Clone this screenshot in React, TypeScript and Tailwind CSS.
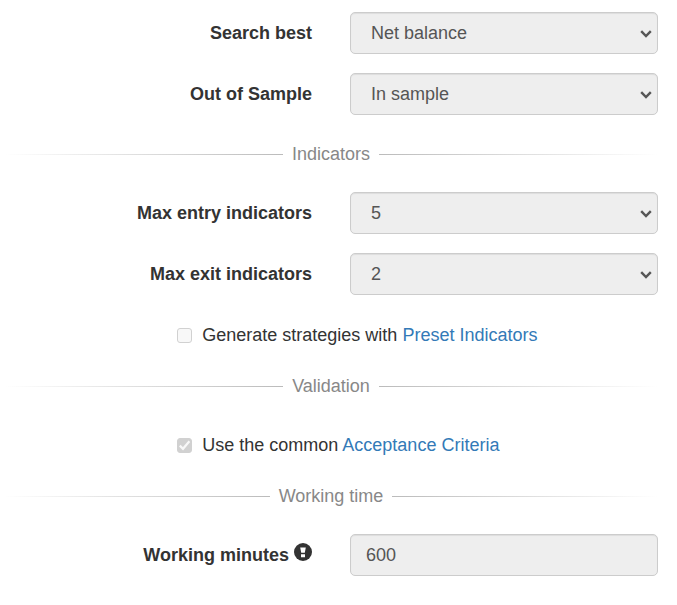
import type { ReactNode } from "react";

interface SelectRow {
  id: string;
  label: string;
  value: string;
}

const SEARCH_ROWS: SelectRow[] = [
  { id: "search-best", label: "Search best", value: "Net balance" },
  { id: "out-of-sample", label: "Out of Sample", value: "In sample" },
];

const INDICATOR_ROWS: SelectRow[] = [
  { id: "max-entry-indicators", label: "Max entry indicators", value: "5" },
  { id: "max-exit-indicators", label: "Max exit indicators", value: "2" },
];

function Field({ id, label, icon, children }: { id: string; label: string; icon?: ReactNode; children: ReactNode }) {
  return (
    <div className="grid grid-cols-2 items-center gap-[23px] px-[19px]">
      <label htmlFor={id} className="flex items-start justify-end gap-[5px] pr-[15px] text-right font-bold">
        {label}
        {icon}
      </label>
      {children}
    </div>
  );
}

function SelectField({ id, label, value }: SelectRow) {
  return (
    <Field id={id} label={label}>
      <div className="relative">
        <select
          id={id}
          defaultValue={value}
          disabled
          className="block h-[42px] w-full appearance-none rounded-[5px] border border-[#cccccc] bg-[#eeeeee] pr-8 pl-5 text-[#555555] opacity-100 shadow-[inset_0_1px_1px_rgba(0,0,0,0.075)]"
        >
          <option>{value}</option>
        </select>
        <svg
          viewBox="0 0 12 8"
          className="pointer-events-none absolute top-[18px] right-[6px] h-2 w-3"
          fill="none"
          stroke="#555555"
          strokeWidth="2.4"
          aria-hidden="true"
        >
          <path d="M1.2 1.2 6 6 10.8 1.2" />
        </svg>
      </div>
    </Field>
  );
}

function CheckRow({ id, checked, text, link }: { id: string; checked: boolean; text: string; link: string }) {
  return (
    <div className="ml-[25%] flex items-center gap-[10px] pl-2">
      <span className="relative block size-[15px] shrink-0">
        <input
          id={id}
          type="checkbox"
          defaultChecked={checked}
          disabled
          className="block size-[15px] appearance-none rounded-[3px] border border-[#d1d1d1] bg-[#f8f8f8] checked:bg-[#d1d1d1]"
        />
        {checked && (
          <svg viewBox="0 0 15 15" className="pointer-events-none absolute inset-0" fill="none" stroke="#f8f8f8" strokeWidth="2.2" aria-hidden="true">
            <path d="M2.8 7.6 6 10.8 12.4 3.2" />
          </svg>
        )}
      </span>
      <label htmlFor={id}>
        {text}{" "}
        <a href="#" className="text-[#337ab7]">
          {link}
        </a>
      </label>
    </div>
  );
}

// Section title with hairlines fading out towards the edges.
function Divider({ title }: { title: string }) {
  return (
    <div className="flex items-center gap-[9px] pr-[19px] pl-1 text-[#888888]">
      <span className="h-px flex-1 bg-linear-to-r from-transparent to-[#bbbbbb]" />
      <h2>{title}</h2>
      <span className="h-px flex-1 bg-linear-to-l from-transparent to-[#bbbbbb]" />
    </div>
  );
}

function ExclamationIcon() {
  return (
    <svg viewBox="0 0 18 18" className="size-[18px] shrink-0" role="img" aria-label="Info">
      <circle cx="9" cy="9" r="9" fill="#333333" />
      <path d="M6.2 4.4h5.6l-1 5.4H7.2zM7 11.2h4v3H7z" fill="#ffffff" />
    </svg>
  );
}

export default function App() {
  return (
    <main className="flex flex-col bg-white pt-3 pb-7 font-['Liberation_Sans',Arial,sans-serif] text-[18px] leading-6 text-[#333333]">
      <div className="flex flex-col gap-[19px]">
        {SEARCH_ROWS.map((row) => (
          <SelectField key={row.id} {...row} />
        ))}
      </div>

      <section className="mt-[27px] flex flex-col gap-[26px]">
        <Divider title="Indicators" />
        <div className="flex flex-col gap-[19px] pb-0.5">
          {INDICATOR_ROWS.map((row) => (
            <SelectField key={row.id} {...row} />
          ))}
        </div>
        <CheckRow id="preset" checked={false} text="Generate strategies with" link="Preset Indicators" />
      </section>

      <section className="mt-[27px] flex flex-col gap-[35px]">
        <Divider title="Validation" />
        <CheckRow id="criteria" checked text="Use the common" link="Acceptance Criteria" />
      </section>

      <section className="mt-[27px] flex flex-col gap-[26px]">
        <Divider title="Working time" />
        <Field id="working-minutes" label="Working minutes" icon={<ExclamationIcon />}>
          <input
            id="working-minutes"
            type="text"
            defaultValue="600"
            disabled
            className="block h-[42px] w-full rounded-[5px] border border-[#cccccc] bg-[#eeeeee] px-[15px] text-[#555555] shadow-[inset_0_1px_1px_rgba(0,0,0,0.075)]"
          />
        </Field>
      </section>
    </main>
  );
}
